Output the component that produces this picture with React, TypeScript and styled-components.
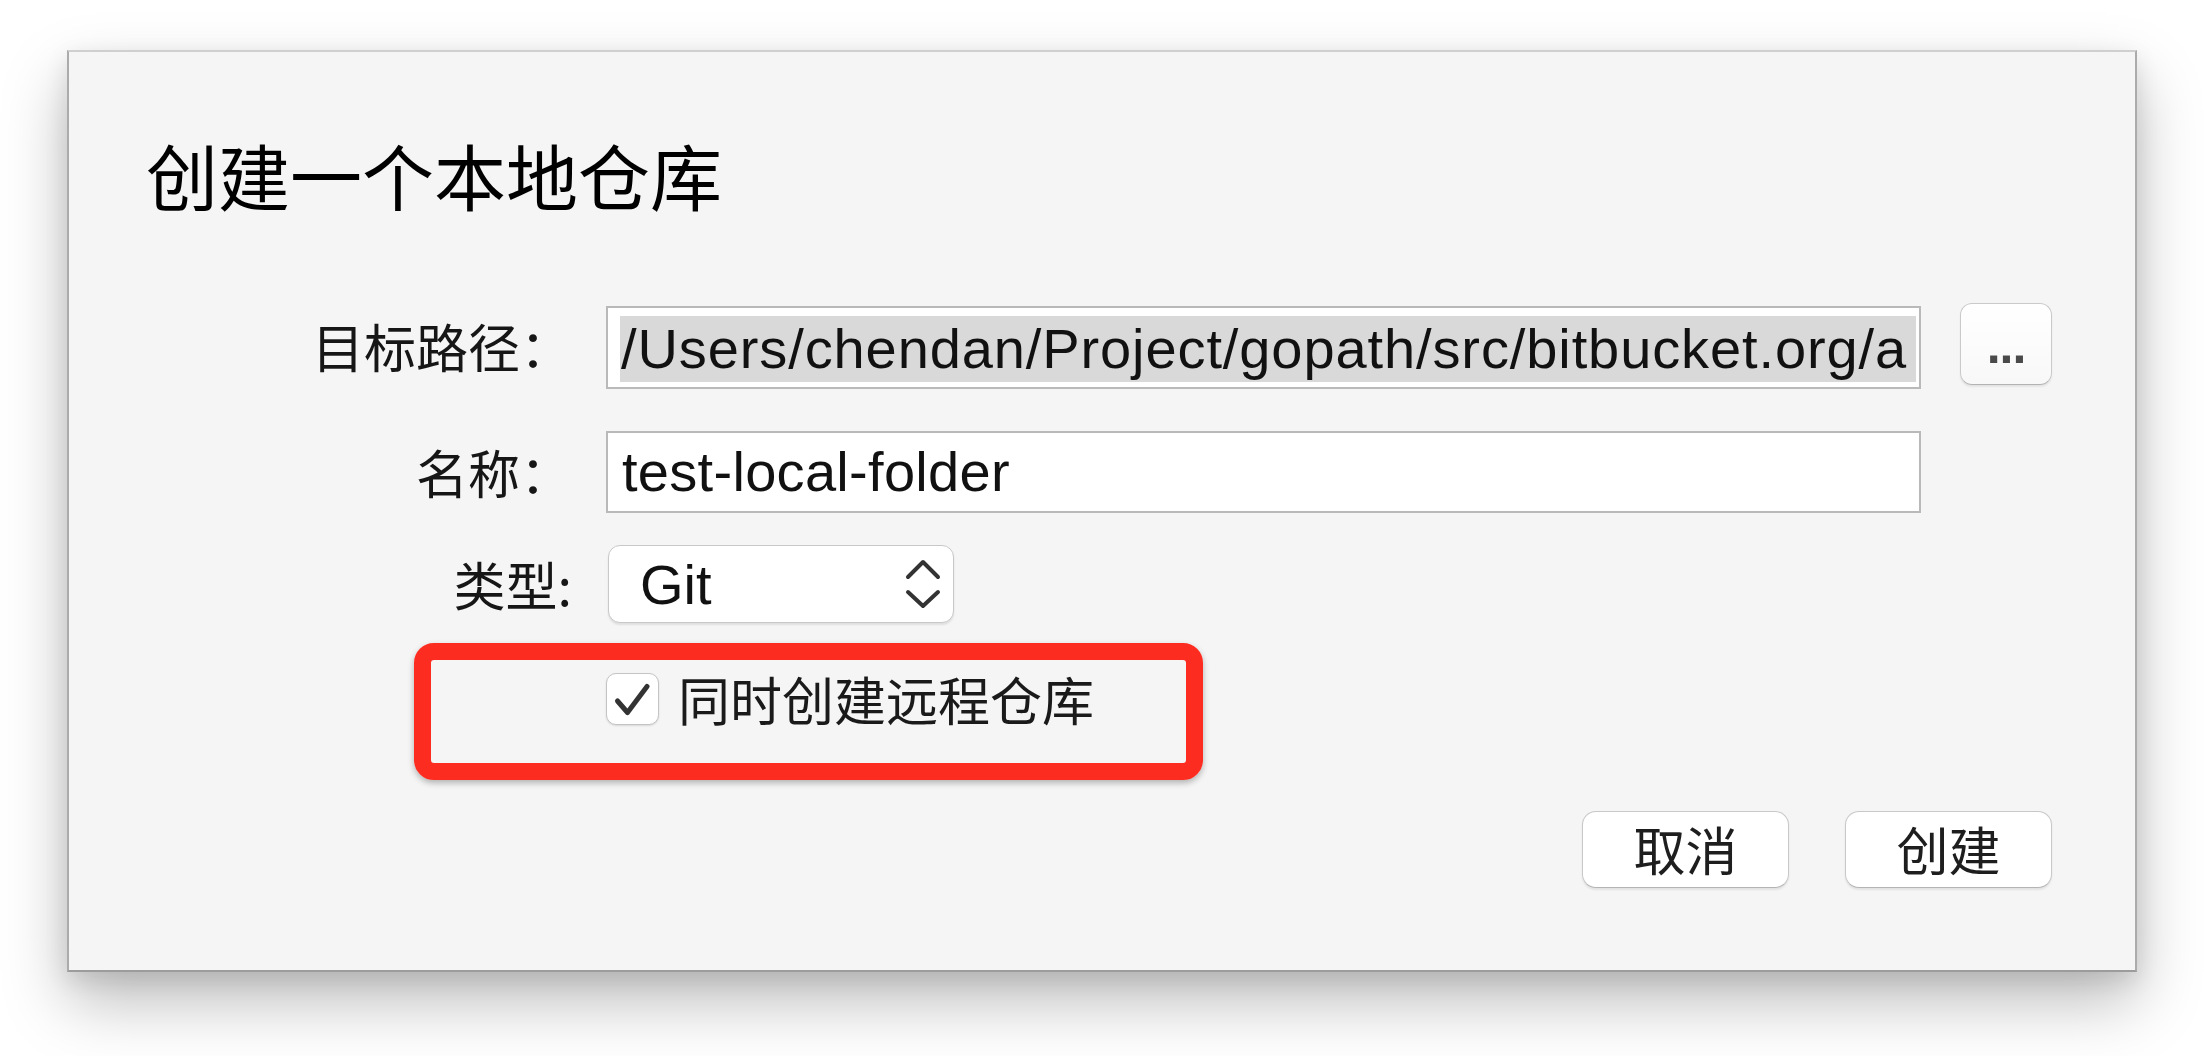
import React from "react";
import styled, { createGlobalStyle } from "styled-components";

const GlobalStyle = createGlobalStyle`
  html, body {
    margin: 0;
    padding: 0;
    background: #ffffff;
  }
  body {
    font-family: "Noto Sans CJK SC", "Liberation Sans", sans-serif;
    color: #111111;
  }
`;

const Page = styled.div`
  width: 2204px;
  height: 1056px;
  box-sizing: border-box;
  padding: 50px 0 0 67px;
  overflow: hidden;
`;

const Dialog = styled.div`
  width: 2070px;
  height: 922px;
  box-sizing: border-box;
  display: flex;
  flex-direction: column;
  padding: 86px 83px 0 77px;
  background: #f5f5f5;
  border: 2px solid #ababab;
  border-top-color: #cfcfcf;
  border-bottom-color: #9c9c9c;
  box-shadow: 0 30px 60px rgba(0, 0, 0, 0.26), 0 8px 22px rgba(0, 0, 0, 0.1);
`;

const Title = styled.h1`
  margin: 0;
  font-size: 72px;
  line-height: 72px;
  font-weight: 400;
  color: #000000;
`;

const Form = styled.div`
  display: flex;
  flex-direction: column;
  margin-top: 93px;
`;

type RowProps = {
  $top: number;
  $height: number;
};

const Row = styled.div<RowProps>`
  display: flex;
  align-items: center;
  height: ${(p) => p.$height}px;
  margin-top: ${(p) => p.$top}px;
`;

const Label = styled.div`
  flex: none;
  width: 426px;
  text-align: right;
  font-size: 52px;
  line-height: 52px;
  color: #161616;
`;

type TextBoxProps = {
  $spacing: number;
};

const TextBox = styled.div<TextBoxProps>`
  flex: none;
  width: 1315px;
  box-sizing: border-box;
  margin-left: 34px;
  border: 2px solid #b9b9b9;
  background: #ffffff;
  overflow: hidden;
  white-space: nowrap;
  font-family: "Liberation Sans", sans-serif;
  font-size: 56px;
  letter-spacing: ${(p) => p.$spacing}px;
  color: #111111;
`;

const PathBox = styled(TextBox)`
  height: 83px;
  margin-top: 3px;
  padding: 8px 3px 5px 12px;
`;

const Selection = styled.div`
  height: 100%;
  line-height: 66px;
  padding-left: 1px;
  background: #d9d9d9;
  overflow: hidden;
`;

const NameBox = styled(TextBox)`
  height: 82px;
  line-height: 78px;
  padding: 0 14px;
`;

const BrowseButton = styled.div`
  flex: none;
  width: 92px;
  height: 82px;
  box-sizing: border-box;
  margin: 0 0 4px 39px;
  border: 1.5px solid #cacaca;
  border-bottom-color: #b3b3b3;
  border-radius: 12px;
  background: linear-gradient(#ffffff, #f8f8f8);
  box-shadow: 0 2px 2px rgba(0, 0, 0, 0.07);
  text-align: center;
  font-family: "Liberation Sans", sans-serif;
  font-weight: 700;
  font-size: 50px;
  line-height: 84px;
  letter-spacing: -1px;
  color: #4a4a4a;
`;

const Popup = styled.div`
  flex: none;
  width: 346px;
  height: 78px;
  box-sizing: border-box;
  margin-left: 36px;
  display: flex;
  align-items: center;
  justify-content: space-between;
  padding: 0 12px 0 31px;
  border: 1.5px solid #c8c8c8;
  border-radius: 12px;
  background: #ffffff;
  box-shadow: 0 2px 2px rgba(0, 0, 0, 0.09);
  font-family: "Liberation Sans", sans-serif;
  font-size: 56px;
  color: #111111;
`;

const Annotation = styled.div`
  width: 789px;
  height: 137px;
  box-sizing: border-box;
  margin: 20px 0 0 268px;
  display: flex;
  align-items: flex-start;
  padding: 13px 0 0 175px;
  border: 17px solid #fd2c20;
  border-radius: 20px;
  box-shadow: 0 3px 6px rgba(0, 0, 0, 0.28);
`;

const Checkbox = styled.div`
  flex: none;
  width: 53px;
  height: 52px;
  box-sizing: border-box;
  border: 1.5px solid #c4c4c4;
  border-radius: 10px;
  background: #ffffff;
  box-shadow: 0 1px 2px rgba(0, 0, 0, 0.12);
`;

const CheckText = styled.span`
  margin-left: 19px;
  font-size: 52px;
  line-height: 52px;
  color: #1a1a1a;
`;

const Footer = styled.div`
  display: flex;
  justify-content: flex-end;
  gap: 56px;
  margin-top: 31px;
`;

const PushButton = styled.div`
  width: 207px;
  height: 77px;
  box-sizing: border-box;
  border: 1.5px solid #c8c8c8;
  border-bottom-color: #b4b4b4;
  border-radius: 14px;
  background: #ffffff;
  box-shadow: 0 2px 2px rgba(0, 0, 0, 0.08);
  text-align: center;
  font-size: 52px;
  line-height: 73px;
  color: #1e1e1e;
`;

const Chevrons = () => (
  <svg width="36" height="50" viewBox="-3 -3 36 50">
    <polyline
      points="0,15 15,0 30,15"
      fill="none"
      stroke="#333"
      strokeWidth="4"
      strokeLinecap="round"
      strokeLinejoin="round"
    />
    <polyline
      points="0,30 15,44 30,30"
      fill="none"
      stroke="#333"
      strokeWidth="4"
      strokeLinecap="round"
      strokeLinejoin="round"
    />
  </svg>
);

const CheckMark = () => (
  <svg width="50" height="49" viewBox="0 0 50 49">
    <polyline
      points="10.5,27 20.5,38.5 40,12.5"
      fill="none"
      stroke="#333"
      strokeWidth="5"
      strokeLinecap="round"
      strokeLinejoin="round"
    />
  </svg>
);

const App = () => {
  return (
    <>
      <GlobalStyle />
      <Page>
        <Dialog>
          <Title>创建一个本地仓库</Title>
          <Form>
            <Row $top={0} $height={86}>
              <Label>目标路径：</Label>
              <PathBox $spacing={0.9}>
                <Selection>/Users/chendan/Project/gopath/src/bitbucket.org/a</Selection>
              </PathBox>
              <BrowseButton>...</BrowseButton>
            </Row>
            <Row $top={42} $height={82}>
              <Label>名称：</Label>
              <NameBox $spacing={0.3}>test-local-folder</NameBox>
            </Row>
            <Row $top={32} $height={78}>
              <Label>类型:</Label>
              <Popup>
                <span>Git</span>
                <Chevrons />
              </Popup>
            </Row>
            <Annotation>
              <Checkbox>
                <CheckMark />
              </Checkbox>
              <CheckText>同时创建远程仓库</CheckText>
            </Annotation>
            <Footer>
              <PushButton>取消</PushButton>
              <PushButton>创建</PushButton>
            </Footer>
          </Form>
        </Dialog>
      </Page>
    </>
  );
};

export default App;
